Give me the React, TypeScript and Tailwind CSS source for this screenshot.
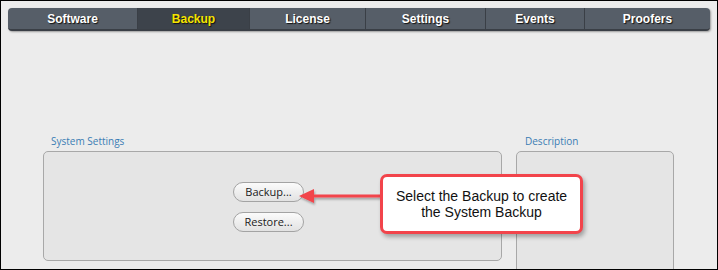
import React from "react";

const tabs = [
  { label: "Software", w: "w-[129px]" },
  { label: "Backup", w: "w-[112px]", active: true },
  { label: "License", w: "w-[116px]" },
  { label: "Settings", w: "w-[120px]" },
  { label: "Events", w: "w-[99px]" },
  { label: "Proofers", w: "w-[126px]" },
];

export default function App() {
  return (
    <div className="relative w-[718px] h-[270px] overflow-hidden border border-black bg-[#ececec] font-['Liberation_Sans',Arial,sans-serif]">
      <div className="mx-[7px] mt-[7px] flex h-[23px] overflow-hidden rounded-[4px] border-b-2 border-[#3a3f46] bg-[#565e68] shadow-[1px_1px_2px_rgba(0,0,0,0.35)]">
        {tabs.map((t, i) => (
          <div
            key={t.label}
            className={`${t.w} flex items-center justify-center text-[12px] font-bold [text-shadow:1px_1px_1px_#111] ${
              i > 0 ? "border-l border-[#3a3f46]" : ""
            } ${t.active ? "bg-[#3d434b] text-[#f5e400]" : "text-white"}`}
          >
            {t.label}
          </div>
        ))}
      </div>

      <div className="ml-[42px] mt-[103px] flex gap-[14px] font-['Open_Sans','DejaVu_Sans',sans-serif]">
        <div className="flex w-[459px] flex-col">
          <div className="ml-[8px] h-[17px] text-[10px] leading-[14px] text-[#3b7db4]">System Settings</div>
          <div className="h-[110px] rounded-[5px] border border-[#a8a8a8] bg-[#e5e5e5] pl-[189px] pt-[30px]">
            <div className="flex flex-col gap-[10px]">
              <button className="flex h-[20px] w-[71px] items-center justify-center rounded-full border border-[#a3a3a3] bg-gradient-to-b from-[#fbfbfb] to-[#e2e2e2] text-[11px] text-[#1a1a1a]">
                Backup...
              </button>
              <button className="flex h-[20px] w-[71px] items-center justify-center rounded-full border border-[#a3a3a3] bg-gradient-to-b from-[#fbfbfb] to-[#e2e2e2] text-[11px] text-[#1a1a1a]">
                Restore...
              </button>
            </div>
          </div>
        </div>
        <div className="flex w-[158px] flex-col">
          <div className="ml-[9px] h-[17px] text-[10px] leading-[14px] text-[#3b7db4]">Description</div>
          <div className="h-[130px] rounded-[5px] border border-[#a8a8a8] bg-[#e5e5e5]"></div>
        </div>
      </div>

      <svg className="absolute left-[296px] top-[186px]" width="90" height="20" viewBox="0 0 90 20">
        <defs>
          <filter id="sh" x="-10%" y="-50%" width="130%" height="200%">
            <feDropShadow dx="1" dy="2" stdDeviation="1.2" floodColor="#000" floodOpacity="0.3" />
          </filter>
        </defs>
        <g filter="url(#sh)">
          <line x1="14" y1="9" x2="88" y2="9" stroke="#f2444b" strokeWidth="3" />
          <polygon points="2,9 17,2 17,16" fill="#f2444b" />
        </g>
      </svg>

      <div className="absolute left-[379px] top-[173px] flex h-[60px] w-[203px] flex-col items-center justify-center rounded-[7px] border-[3px] border-[#f2444b] bg-white text-center text-[14px] leading-[16px] text-[#111] shadow-[2px_3px_4px_rgba(0,0,0,0.3)]">
        <div>Select the Backup to create</div>
        <div>the System Backup</div>
      </div>
    </div>
  );
}
